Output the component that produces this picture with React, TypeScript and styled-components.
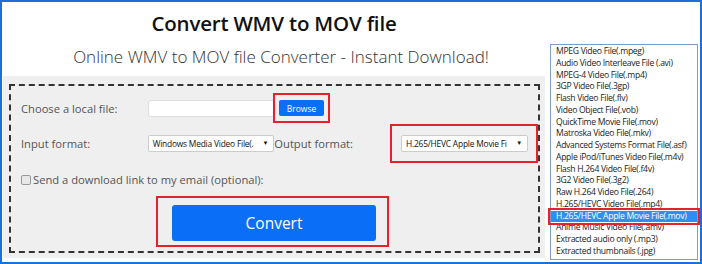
import React from 'react';
import styled, { createGlobalStyle } from 'styled-components';

const GlobalStyle = createGlobalStyle`
  * {
    box-sizing: border-box;
    margin: 0;
    padding: 0;
  }

  body {
    font-family: 'Open Sans', 'Noto Sans', sans-serif;
    background-color: #fff;
    color: #333;
  }
`;

const Frame = styled.div`
  position: relative;
  width: 702px;
  height: 264px;
  border: 2px solid #1d6fd6;
  overflow: hidden;
  background: #fff;
`;

const Main = styled.div`
  width: 542px;
  margin-left: 1px;
  display: flex;
  flex-direction: column;
  align-items: center;
`;

const Title = styled.h1`
  margin-top: 6px;
  font-size: 20.5px;
  line-height: 30px;
  font-weight: 600;
  letter-spacing: -0.2px;
  color: #111;
`;

const Subtitle = styled.h2`
  margin-top: 7px;
  margin-left: 14px;
  font-size: 17px;
  line-height: 24px;
  font-weight: 300;
  color: #333;
`;

const Panel = styled.div`
  align-self: stretch;
  margin-top: 7px;
  background: #efefef;
  padding: 8px 5px 5px 6px;
`;

const Dashed = styled.div`
  border: 2px dashed #333;
  padding: 7px 0 4px 10px;
  display: flex;
  flex-direction: column;
`;

const Row = styled.div<{ $h: number }>`
  display: flex;
  align-items: center;
  height: ${p => p.$h}px;
`;

const Label = styled.label<{ $w?: number }>`
  width: ${p => (p.$w ? `${p.$w}px` : 'auto')};
  font-size: 11.2px;
  color: #555;
  white-space: nowrap;
`;

const FileInput = styled.div`
  width: 128px;
  height: 17px;
  background: #fff;
  border: 1px solid #ddd;
  border-radius: 3px;
`;

const RedBox = styled.div<{ $pad: string }>`
  border: 2px solid #e3222b;
  padding: ${p => p.$pad};
  display: flex;
`;

const BrowseBox = styled(RedBox)`
  margin-left: -3px;
`;

const SmallBlue = styled.button`
  width: 45px;
  height: 16px;
  background: #0a6ef6;
  color: #fff;
  border: none;
  border-radius: 2px;
  font-family: inherit;
  font-size: 8.5px;
`;

const Select = styled.div<{ $w: number }>`
  width: ${p => p.$w}px;
  height: 17px;
  background: #fff;
  border: 1px solid #ccc;
  border-radius: 2px;
  display: flex;
  align-items: center;
  justify-content: space-between;
  padding: 0 5px 0 4px;
  font-size: 8.4px;
  letter-spacing: -0.2px;
  color: #111;
  white-space: nowrap;
  overflow: hidden;
`;

const Arrow = styled.span`
  font-size: 6px;
  margin-left: 3px;
`;

const Check = styled.span`
  width: 10px;
  height: 10px;
  border: 1px solid #999;
  border-radius: 2px;
  background: #e8e8e8;
  margin-right: 2px;
`;

const ConvertBox = styled(RedBox)`
  align-self: flex-start;
  margin-left: 135px;
`;

const ConvertButton = styled.button`
  width: 204px;
  height: 36px;
  background: #0a6ef6;
  color: #fff;
  border: none;
  border-radius: 3px;
  font-family: inherit;
  font-size: 15.5px;
`;

const DropList = styled.ul`
  position: absolute;
  left: 548px;
  top: 42px;
  width: 148px;
  list-style: none;
  background: #fff;
  border: 1px solid #7a9cc9;
  padding: 1px 0;
`;

const Item = styled.li<{ $selected?: boolean }>`
  height: 11.75px;
  line-height: 11.75px;
  padding-left: 5px;
  font-size: 8.6px;
  letter-spacing: -0.3px;
  white-space: nowrap;
  color: ${p => (p.$selected ? '#fff' : '#222')};
  background: ${p => (p.$selected ? '#2f8ff0' : 'transparent')};
  outline: ${p => (p.$selected ? '2px solid #e3222b' : 'none')};
  outline-offset: 1px;
`;

const formats = [
  'MPEG Video File(.mpeg)',
  'Audio Video Interleave File (.avi)',
  'MPEG-4 Video File(.mp4)',
  '3GP Video File(.3gp)',
  'Flash Video File(.flv)',
  'Video Object File(.vob)',
  'QuickTime Movie File(.mov)',
  'Matroska Video File(.mkv)',
  'Advanced Systems Format File(.asf)',
  'Apple iPod/iTunes Video File(.m4v)',
  'Flash H.264 Video File(.f4v)',
  '3G2 Video File(.3g2)',
  'Raw H.264 Video File(.264)',
  'H.265/HEVC Video File(.mp4)',
  'H.265/HEVC Apple Movie File(.mov)',
  'Anime Music Video File(.amv)',
  'Extracted audio only (.mp3)',
  'Extracted thumbnails (.jpg)',
];

const selectedFormat = 'H.265/HEVC Apple Movie File(.mov)';

export default function App() {
  return (
    <Frame>
      <GlobalStyle />
      <Main>
        <Title>Convert WMV to MOV file</Title>
        <Subtitle>Online WMV to MOV file Converter - Instant Download!</Subtitle>
        <Panel>
          <Dashed>
            <Row $h={30}>
              <Label $w={127}>Choose a local file:</Label>
              <FileInput />
              <BrowseBox $pad="5px 4px 5px 4px">
                <SmallBlue>Browse</SmallBlue>
              </BrowseBox>
            </Row>
            <Row $h={40}>
              <Label $w={127}>Input format:</Label>
              <Select $w={127}>
                Windows Media Video File(.<Arrow>▼</Arrow>
              </Select>
              <Label $w={116}>Output format:</Label>
              <RedBox $pad="9px 8px 9px 9px">
                <Select $w={127}>
                  H.265/HEVC Apple Movie Fi<Arrow>▼</Arrow>
                </Select>
              </RedBox>
            </Row>
            <Row $h={33}>
              <Check />
              <Label>Send a download link to my email (optional):</Label>
            </Row>
            <ConvertBox $pad="7px 11px 4px 14px">
              <ConvertButton>Convert</ConvertButton>
            </ConvertBox>
          </Dashed>
        </Panel>
      </Main>
      <DropList>
        {formats.map(f => (
          <Item key={f} $selected={f === selectedFormat}>
            {f}
          </Item>
        ))}
      </DropList>
    </Frame>
  );
}
